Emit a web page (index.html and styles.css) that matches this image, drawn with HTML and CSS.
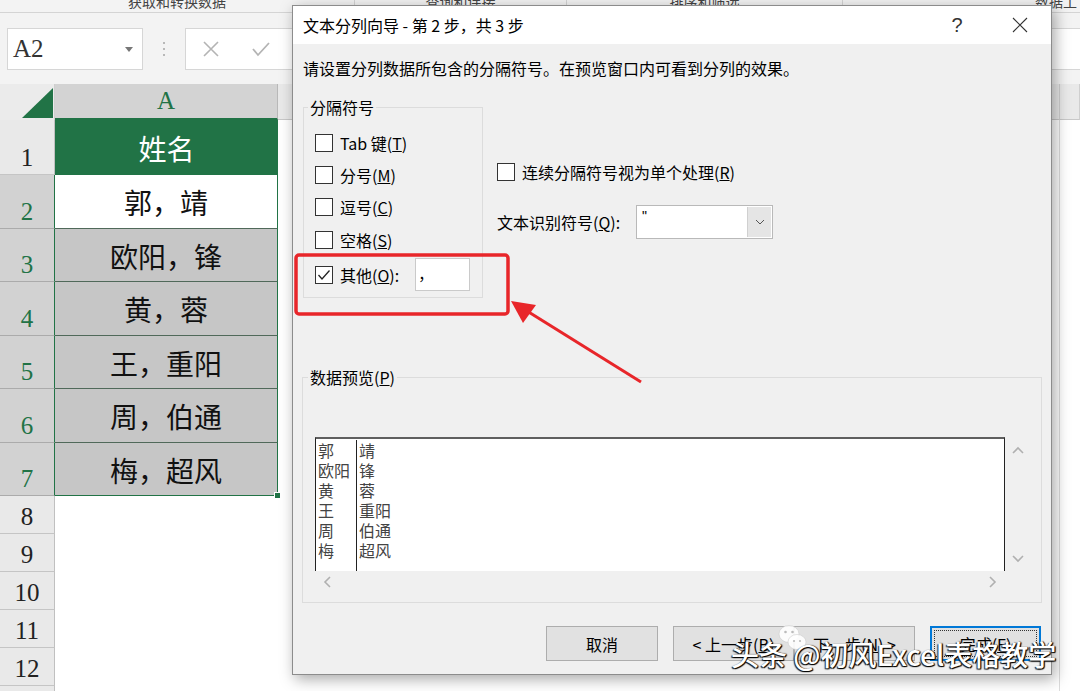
FILE: index.html
```html
<!DOCTYPE html>
<html lang="zh-CN">
<head>
    <meta charset="UTF-8">
    <meta name="viewport" content="width=device-width, initial-scale=1.0">
    <title>文本分列向导 - 第 2 步，共 3 步</title>
    <link rel="stylesheet" href="styles.css">
</head>
<body>
    <div class="excel">
        <div class="ribbon-foot">
            <div class="group g1">获取和转换数据</div>
            <div class="group g2">查询和连接</div>
            <div class="group g3">排序和筛选</div>
            <div class="group g4">数据工具</div>
        </div>

        <div class="formula-bar">
            <div class="name-box">
                <span>A2</span>
                <svg width="8" height="5" viewBox="0 0 8 5"><path d="M0 0 L8 0 L4 5 Z" fill="#777"/></svg>
            </div>
            <div class="grip"><i></i><i></i><i></i></div>
            <div class="formula-input">
                <svg width="16" height="16" viewBox="0 0 16 16"><path d="M1 1 L15 15 M15 1 L1 15" stroke="#b4b4b4" stroke-width="1.6"/></svg>
                <svg width="18" height="16" viewBox="0 0 18 16"><path d="M1 8 L6 14 L17 2" stroke="#b4b4b4" stroke-width="1.8" fill="none"/></svg>
            </div>
        </div>

        <div class="sheet">
            <div class="row head">
                <div class="corner">
                    <svg width="55" height="36" viewBox="0 0 55 36"><path d="M22 34 L53 34 L53 4 Z" fill="#217346"/></svg>
                </div>
                <div class="col-head sel">A</div>
                <div class="col-head">B</div>
                <div class="col-head"></div>
            </div>

            <div class="row top">
                <div class="rh">1</div>
                <div class="cell header-cell">姓名</div>
                <div class="cell blank"></div>
            </div>
            <div class="row tall sel">
                <div class="rh">2</div>
                <div class="cell active">郭，靖</div>
                <div class="cell blank"></div>
            </div>
            <div class="row tall sel">
                <div class="rh">3</div>
                <div class="cell">欧阳，锋</div>
                <div class="cell blank"></div>
            </div>
            <div class="row tall sel">
                <div class="rh">4</div>
                <div class="cell">黄，蓉</div>
                <div class="cell blank"></div>
            </div>
            <div class="row tall sel">
                <div class="rh">5</div>
                <div class="cell">王，重阳</div>
                <div class="cell blank"></div>
            </div>
            <div class="row tall sel">
                <div class="rh">6</div>
                <div class="cell">周，伯通</div>
                <div class="cell blank"></div>
            </div>
            <div class="row tall sel last">
                <div class="rh">7</div>
                <div class="cell">梅，超风<span class="fill-handle"></span></div>
                <div class="cell blank"></div>
            </div>
            <div class="row short"><div class="rh">8</div><div class="cell empty"></div><div class="cell blank"></div></div>
            <div class="row short"><div class="rh">9</div><div class="cell empty"></div><div class="cell blank"></div></div>
            <div class="row short"><div class="rh">10</div><div class="cell empty"></div><div class="cell blank"></div></div>
            <div class="row short"><div class="rh">11</div><div class="cell empty"></div><div class="cell blank"></div></div>
            <div class="row short"><div class="rh">12</div><div class="cell empty"></div><div class="cell blank"></div></div>
            <div class="row short"><div class="rh">13</div><div class="cell empty"></div><div class="cell blank"></div></div>
        </div>
    </div>

    <div class="dialog">
        <div class="title-bar">
            <div class="dlg-title">文本分列向导 - 第 2 步，共 3 步</div>
            <div class="tb-btn help">?</div>
            <div class="tb-btn close">
                <svg width="16" height="16" viewBox="0 0 16 16"><path d="M1 1 L15 15 M15 1 L1 15" stroke="#333" stroke-width="1.1"/></svg>
            </div>
        </div>

        <div class="dlg-body">
            <div class="intro">请设置分列数据所包含的分隔符号。在预览窗口内可看到分列的效果。</div>

            <div class="main-row">
                <fieldset class="group-box delims">
                    <legend>分隔符号</legend>
                    <div class="opt"><span class="check"></span>Tab 键(<u>T</u>)</div>
                    <div class="opt"><span class="check"></span>分号(<u>M</u>)</div>
                    <div class="opt"><span class="check"></span>逗号(<u>C</u>)</div>
                    <div class="opt tall-opt"><span class="check"></span>空格(<u>S</u>)</div>
                    <div class="opt other">
                        <span class="check on">
                            <svg width="16" height="16" viewBox="0 0 16 16"><path d="M2.5 8 L6 12 L13.5 3.5" stroke="#222" stroke-width="1.3" fill="none"/></svg>
                        </span>其他(<u>O</u>):
                        <span class="other-input">，</span>
                    </div>
                </fieldset>

                <div class="right-opts">
                    <div class="opt single"><span class="check"></span>连续分隔符号视为单个处理(<u>R</u>)</div>
                    <div class="qual-row">
                        <span class="qual-label">文本识别符号(<u>Q</u>):</span>
                        <div class="combo">
                            <span class="combo-value">"</span>
                            <span class="combo-btn">
                                <svg width="10" height="6" viewBox="0 0 10 6"><path d="M1 1 L5 5 L9 1" stroke="#555" stroke-width="1" fill="none"/></svg>
                            </span>
                        </div>
                    </div>
                </div>
            </div>

            <fieldset class="group-box preview">
                <legend>数据预览(<u>P</u>)</legend>
                <div class="preview-grid">
                    <div class="preview-box">
                        <div class="pcol first">郭<br>欧阳<br>黄<br>王<br>周<br>梅</div>
                        <div class="pcol">靖<br>锋<br>蓉<br>重阳<br>伯通<br>超风</div>
                    </div>
                    <div class="vscroll">
                        <svg width="12" height="8" viewBox="0 0 12 8"><path d="M1 7 L6 2 L11 7" stroke="#b0b0b0" stroke-width="1.6" fill="none"/></svg>
                        <svg width="12" height="8" viewBox="0 0 12 8"><path d="M1 1 L6 6 L11 1" stroke="#b0b0b0" stroke-width="1.6" fill="none"/></svg>
                    </div>
                    <div class="hscroll">
                        <svg width="8" height="12" viewBox="0 0 8 12"><path d="M7 1 L2 6 L7 11" stroke="#b0b0b0" stroke-width="1.6" fill="none"/></svg>
                        <svg width="8" height="12" viewBox="0 0 8 12"><path d="M1 1 L6 6 L1 11" stroke="#b0b0b0" stroke-width="1.6" fill="none"/></svg>
                    </div>
                </div>
            </fieldset>

            <div class="buttons">
                <button class="btn cancel">取消</button>
                <button class="btn step">&lt; 上一步(<u>B</u>)</button>
                <button class="btn step">下一步(<u>N</u>) &gt;</button>
                <button class="btn finish"><span>完成(<u>F</u>)</span></button>
            </div>
        </div>
    </div>

    <!-- 标注：红框和箭头 -->
    <svg class="annot" width="1080" height="691" viewBox="0 0 1080 691">
        <rect x="296" y="255" width="212" height="59" rx="3" fill="none" stroke="#e8262a" stroke-width="3.5"/>
        <path d="M641 382 L527 311" stroke="#e8262a" stroke-width="3" fill="none"/>
        <path d="M511 301 L536 305 L523 323 Z" fill="#e8262a"/>
    </svg>

    <div class="wm-icon">
        <svg width="30" height="28" viewBox="0 0 30 28">
            <ellipse cx="11" cy="10" rx="10" ry="8.5" fill="rgba(255,255,255,0.9)" stroke="#ccc" stroke-width="0.6"/>
            <ellipse cx="19" cy="18" rx="9" ry="7.5" fill="rgba(255,255,255,0.9)" stroke="#ccc" stroke-width="0.6"/>
            <circle cx="7.5" cy="8" r="1.3" fill="#bbb"/>
            <circle cx="14.5" cy="8" r="1.3" fill="#bbb"/>
            <circle cx="16" cy="17" r="1.1" fill="#bbb"/>
            <circle cx="22" cy="17" r="1.1" fill="#bbb"/>
        </svg>
    </div>
    <div class="watermark">头条 @初风Excel表格教学</div>
</body>
</html>
```

FILE: styles.css
```css
body {
    margin: 0;
    width: 1080px;
    height: 691px;
    overflow: hidden;
    position: relative;
    background: #fff;
    font-family: "Noto Sans CJK SC", sans-serif;
    color: #000;
}

/* ---------- Excel 背景 ---------- */

.ribbon-foot {
    display: flex;
    height: 12px;
    background: #f3f3f3;
    border-bottom: 1px solid #d4d4d4;
    overflow: hidden;
}

.group {
    height: 30px;
    margin-top: -9px;
    font-size: 14px;
    line-height: 20px;
    color: #444;
    text-align: center;
    border-right: 1px solid #d4d4d4;
    box-sizing: border-box;
}

.g1 { width: 355px; }
.g2 { width: 212px; }
.g3 { width: 276px; }
.g4 { flex: 1; text-align: left; padding-left: 192px; border-right: none; }

.formula-bar {
    display: flex;
    height: 71px;
    padding-top: 15px;
    box-sizing: border-box;
    background: #f3f3f3;
}

.name-box {
    display: flex;
    align-items: center;
    justify-content: space-between;
    width: 136px;
    height: 42px;
    margin-left: 7px;
    padding: 0 9px 0 5px;
    box-sizing: border-box;
    background: #fff;
    border: 1px solid #d6d6d6;
    font-family: "Liberation Serif", serif;
    font-size: 25px;
    color: #333;
}

.grip {
    width: 42px;
    display: flex;
    flex-direction: column;
    align-items: center;
    justify-content: center;
    gap: 4px;
    height: 42px;
}

.grip i {
    width: 2px;
    height: 2px;
    background: #b8b8b8;
}

.formula-input {
    flex: 1;
    display: flex;
    align-items: center;
    gap: 33px;
    padding-left: 17px;
    height: 42px;
    box-sizing: border-box;
    background: #fff;
    border: 1px solid #d6d6d6;
    border-right: none;
}

.row {
    display: grid;
    grid-template-columns: 55px 223px 782px 1fr;
}

.row.head {
    height: 36px;
    background: #ebebeb;
}

.corner {
    background: #ebebeb;
    border-right: 1px solid #cfcfcf;
}

.corner svg {
    display: block;
}

.col-head {
    display: flex;
    align-items: center;
    justify-content: center;
    font-family: "Liberation Serif", serif;
    font-size: 25px;
    color: #444;
    background: #e9e9e9;
    border-right: 1px solid #cfcfcf;
    border-bottom: 1px solid #c8c8c8;
}

.col-head.sel {
    background: #d3d3d3;
    color: #217346;
    border-bottom: 2px solid #217346;
    border-right: 1px solid #b8b8b8;
}

.row.top { height: 55px; }
.row.tall { height: 53.5px; }
.row.short { height: 38px; }

.rh {
    display: flex;
    align-items: flex-end;
    justify-content: center;
    padding-bottom: 4px;
    font-family: "Liberation Serif", serif;
    font-size: 25px;
    line-height: 25px;
    background: #e9e9e9;
    border-bottom: 1px solid #c5c5c5;
    border-right: 1px solid #c0c0c0;
    color: #222;
}

.row.sel .rh {
    background: #d2d2d2;
    color: #217346;
    border-bottom-color: #ababab;
    border-right: 1px solid #217346;
}

.cell {
    display: flex;
    align-items: center;
    justify-content: center;
    padding-top: 2px;
    font-size: 28px;
    color: #111;
    position: relative;
}

.cell.header-cell {
    background: #217346;
    color: #fff;
    padding-top: 0;
}

.row.sel .cell:nth-child(2) {
    background: #c6c6c6;
    border-bottom: 1px solid #50695a;
    border-right: 1px solid #217346;
}

.row.sel .cell.active {
    background: #fff;
}

.row.last .cell:nth-child(2) {
    border-bottom: 1px solid #217346;
}

.fill-handle {
    position: absolute;
    right: -4px;
    bottom: -4px;
    width: 5px;
    height: 5px;
    background: #217346;
    border: 1px solid #fff;
}

.cell.blank {
    border-right: 1px solid #dcdcdc;
}

/* ---------- 文本分列向导 ---------- */

.dialog {
    position: absolute;
    left: 292px;
    top: 5px;
    width: 760px;
    height: 670px;
    box-sizing: border-box;
    display: flex;
    flex-direction: column;
    background: #f0f0f0;
    border: 1px solid #8c8c8c;
    box-shadow: 3px 4px 14px rgba(0, 0, 0, 0.35);
    font-size: 16px;
    z-index: 2;
}

.title-bar {
    display: flex;
    align-items: center;
    height: 38px;
    padding-left: 10px;
    background: #fff;
    flex-shrink: 0;
}

.dlg-title {
    flex: 1;
    font-size: 16px;
}

.tb-btn {
    width: 46px;
    height: 38px;
    display: flex;
    align-items: center;
    justify-content: center;
}

.help {
    margin-right: 17px;
    font-family: "Liberation Sans", sans-serif;
    font-size: 20px;
    color: #333;
}

.close {
    margin-right: 8px;
}

.dlg-body {
    padding: 0 10px;
}

.intro {
    margin-top: 13px;
    line-height: 22px;
}

.main-row {
    display: flex;
    align-items: flex-start;
    margin-top: 18px;
}

.group-box {
    margin: 0;
    border: 1px solid #dcdcdc;
    box-sizing: border-box;
}

.group-box legend {
    margin-left: -7px;
    padding: 0 2px;
    line-height: 20px;
}

.delims {
    width: 180px;
    padding: 10px 0 4px 11px;
}

.opt {
    display: flex;
    align-items: center;
    height: 32px;
    white-space: nowrap;
}

.opt.tall-opt { height: 33px; }
.opt.other { height: 37px; }

.check {
    width: 16px;
    height: 16px;
    margin-right: 7px;
    border: 1px solid #333;
    background: #fff;
    flex-shrink: 0;
}

.check svg {
    display: block;
}

.other-input {
    width: 55px;
    height: 33px;
    margin-left: 16px;
    box-sizing: border-box;
    padding: 4px 0 0 2px;
    background: #fff;
    border: 1px solid #cacaca;
    font-size: 15px;
}

.right-opts {
    margin-left: 14px;
    margin-top: 64px;
}

.opt.single {
    height: 22px;
}

.qual-row {
    display: flex;
    align-items: center;
    margin-top: 22px;
}

.qual-label {
    width: 139px;
}

.combo {
    display: flex;
    width: 137px;
    height: 34px;
    box-sizing: border-box;
    background: #fff;
    border: 1px solid #b9b9b9;
}

.combo-value {
    flex: 1;
    padding: 2px 0 0 5px;
    font-family: "Liberation Sans", sans-serif;
    font-size: 14px;
}

.combo-btn {
    width: 23px;
    margin: 1px;
    display: flex;
    align-items: center;
    justify-content: center;
    background: #e5e5e5;
    border-left: 1px solid #d0d0d0;
}

.preview {
    width: 740px;
    margin: 69px 0 0 -1px;
    padding: 50px 12px 9px 12px;
}

.preview-grid {
    display: grid;
    grid-template-columns: 690px 24px;
    grid-template-rows: 134px 22px;
}

.preview-box {
    display: flex;
    box-sizing: border-box;
    padding-top: 1px;
    background: #fff;
    border-top: 2px solid #5f5f5f;
    border-left: 1px solid #222;
    border-right: 1px solid #222;
    font-size: 16px;
    line-height: 20px;
    color: #444;
}

.pcol {
    padding-left: 2px;
}

.pcol.first {
    width: 38px;
    border-right: 1px solid #222;
}

.vscroll {
    display: flex;
    flex-direction: column;
    align-items: center;
    justify-content: space-between;
    padding: 9px 0 8px 2px;
}

.hscroll {
    display: flex;
    align-items: center;
    justify-content: space-between;
    padding: 0 8px;
}

.vscroll svg,
.hscroll svg {
    display: block;
}

.buttons {
    display: flex;
    justify-content: flex-end;
    margin-top: 23px;
}

.btn {
    height: 35px;
    padding: 0;
    font-family: "Noto Sans CJK SC", sans-serif;
    font-size: 16px;
    color: #000;
    background: #e1e1e1;
    border: 1px solid #adadad;
}

.btn u {
    text-decoration: underline;
}

.btn.cancel {
    width: 112px;
    margin-right: 15px;
}

.btn.step {
    width: 121px;
}

.btn.finish {
    width: 111px;
    margin-left: 15px;
    padding: 2px;
    border: 2px solid #0078d7;
}

.btn.finish span {
    display: flex;
    align-items: center;
    justify-content: center;
    height: 100%;
    border: 1px dotted #333;
    box-sizing: border-box;
}

/* ---------- 标注和水印 ---------- */

.annot {
    position: absolute;
    left: 0;
    top: 0;
    z-index: 5;
    pointer-events: none;
}

.wm-icon {
    position: absolute;
    left: 778px;
    top: 624px;
    z-index: 6;
}

.wm-icon svg {
    display: block;
}

.watermark {
    position: absolute;
    left: 731px;
    top: 636px;
    z-index: 7;
    font-size: 28px;
    line-height: 36px;
    font-weight: 500;
    color: #fff;
    white-space: nowrap;
    text-shadow: 1px 1px 1px #000, -1px 1px 1px #222, 1px 0 1px #222;
}
```
